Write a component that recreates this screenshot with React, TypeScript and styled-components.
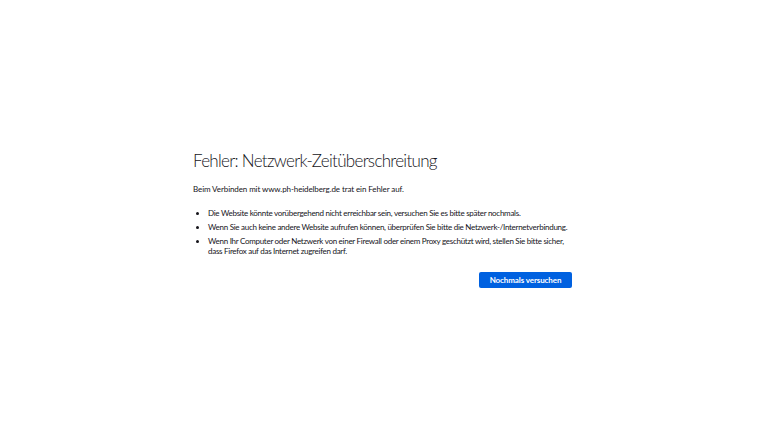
import React from 'react';
import styled, { createGlobalStyle } from 'styled-components';

const GlobalStyle = createGlobalStyle`
  html, body {
    margin: 0;
    padding: 0;
    background: #ffffff;
  }
  body {
    font-family: Lato, "Noto Sans", sans-serif;
    color: #15141a;
  }
`;

const Page = styled.div`
  min-height: 439px;
  display: flex;
  align-items: center;
  justify-content: center;
  box-sizing: border-box;
  padding-bottom: 2px;
`;

const Container = styled.div`
  width: 384px;
  margin-left: -10px;
  display: flex;
  flex-direction: column;
`;

const Title = styled.h1`
  margin: 0 0 12px;
  font-size: 17px;
  font-weight: 300;
  line-height: 22px;
  letter-spacing: -0.7px;
  color: #15141a;
`;

const Intro = styled.p`
  margin: 0 0 13px;
  font-size: 8px;
  line-height: 11px;
  letter-spacing: -0.1px;
`;

const List = styled.ul`
  margin: 0;
  padding-left: 15px;
  display: flex;
  flex-direction: column;
  gap: 4px;
`;

const Item = styled.li`
  font-size: 8px;
  line-height: 10px;
  letter-spacing: -0.28px;
`;

const Actions = styled.div`
  display: flex;
  justify-content: flex-end;
  margin-top: 16px;
  padding-right: 5px;
`;

const Button = styled.button`
  width: 93px;
  height: 16px;
  border: none;
  border-radius: 2px;
  background: #0061e0;
  color: #ffffff;
  font-family: Lato, "Noto Sans", sans-serif;
  font-size: 8px;
  font-weight: 700;
  letter-spacing: -0.1px;
  padding: 0;
  cursor: pointer;
`;

export default function App() {
  return (
    <>
      <GlobalStyle />
      <Page>
        <Container>
          <Title>Fehler: Netzwerk-Zeitüberschreitung</Title>
          <Intro>Beim Verbinden mit www.ph-heidelberg.de trat ein Fehler auf.</Intro>
          <List>
            <Item>Die Website könnte vorübergehend nicht erreichbar sein, versuchen Sie es bitte später nochmals.</Item>
            <Item>Wenn Sie auch keine andere Website aufrufen können, überprüfen Sie bitte die Netzwerk-/Internetverbindung.</Item>
            <Item>
              Wenn Ihr Computer oder Netzwerk von einer Firewall oder einem Proxy geschützt wird, stellen Sie bitte sicher,
              dass Firefox auf das Internet zugreifen darf.
            </Item>
          </List>
          <Actions>
            <Button>Nochmals versuchen</Button>
          </Actions>
        </Container>
      </Page>
    </>
  );
}
